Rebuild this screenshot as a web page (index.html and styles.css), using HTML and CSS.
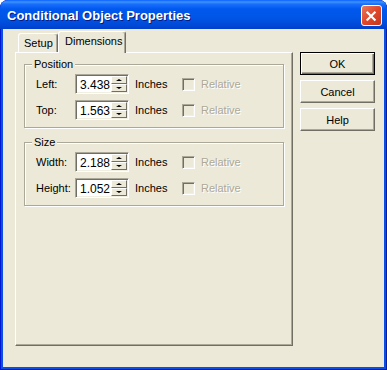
FILE: index.html
```html
<!DOCTYPE html>
<html lang="en">
<head>
    <meta charset="UTF-8">
    <meta name="viewport" content="width=device-width, initial-scale=1.0">
    <title>Conditional Object Properties</title>
    <link rel="stylesheet" href="styles.css">
</head>
<body>
    <div class="window">
        <!-- Title bar -->
        <div class="titlebar">
            <span class="title">Conditional Object Properties</span>
            <span class="close">
                <svg width="21" height="21" viewBox="0 0 21 21">
                    <path d="M6 6 L14 14 M14 6 L6 14" stroke="#fff" stroke-width="2.4" stroke-linecap="square"/>
                </svg>
            </span>
        </div>

        <div class="client">
            <!-- Property sheet -->
            <div class="sheet">
                <div class="tabs">
                    <div class="tab setup">Setup</div>
                    <div class="tab active">Dimensions</div>
                </div>
                <div class="panel">
                    <div class="group">
                        <span class="group-title">Position</span>
                        <div class="row">
                            <span class="row-label">Left:</span>
                            <div class="spin-edit"><span class="value">3.438</span><div class="spinner"><span class="spin-btn up"></span><span class="spin-btn down"></span></div></div>
                            <span class="unit">Inches</span>
                            <span class="check"></span>
                            <span class="check-label">Relative</span>
                        </div>
                        <div class="row">
                            <span class="row-label">Top:</span>
                            <div class="spin-edit"><span class="value">1.563</span><div class="spinner"><span class="spin-btn up"></span><span class="spin-btn down"></span></div></div>
                            <span class="unit">Inches</span>
                            <span class="check"></span>
                            <span class="check-label">Relative</span>
                        </div>
                    </div>
                    <div class="group">
                        <span class="group-title">Size</span>
                        <div class="row">
                            <span class="row-label">Width:</span>
                            <div class="spin-edit"><span class="value">2.188</span><div class="spinner"><span class="spin-btn up"></span><span class="spin-btn down"></span></div></div>
                            <span class="unit">Inches</span>
                            <span class="check"></span>
                            <span class="check-label">Relative</span>
                        </div>
                        <div class="row">
                            <span class="row-label">Height:</span>
                            <div class="spin-edit"><span class="value">1.052</span><div class="spinner"><span class="spin-btn up"></span><span class="spin-btn down"></span></div></div>
                            <span class="unit">Inches</span>
                            <span class="check"></span>
                            <span class="check-label">Relative</span>
                        </div>
                    </div>
                </div>
            </div>

            <!-- Dialog buttons -->
            <div class="buttons">
                <div class="btn default">OK</div>
                <div class="btn">Cancel</div>
                <div class="btn">Help</div>
            </div>
        </div>
    </div>
</body>
</html>
```

FILE: styles.css
```css
body {
    margin: 0;
    background: #fff;
    font: 11px "Liberation Sans", Arial, sans-serif;
    color: #000;
}
.window {
    width: 387px;
    height: 370px;
    box-sizing: border-box;
    padding: 0 3px 3px;
    display: flex;
    flex-direction: column;
    background: #0a4fe2;
    border-radius: 8px 8px 0 0;
    box-shadow: inset 1px 0 #0019cf, inset -1px 0 #001ea0, inset 0 -1px #001ea0;
    overflow: hidden;
}
.titlebar {
    height: 29px;
    margin: 0 -3px;
    flex-shrink: 0;
    display: flex;
    align-items: center;
    justify-content: space-between;
    padding: 0 5px 0 7px;
    background: linear-gradient(#0a5fff 0, #3d95ff 2px, #1a6ffc 4px, #0058ee 9px, #0055e5 18px, #0049d8 25px, #003fc8 29px);
    border-radius: 8px 8px 0 0;
}
.title {
    color: #fff;
    font-weight: bold;
    font-size: 13px;
    text-shadow: 1px 1px #0a1883;
    margin-top: 1px;
}
.close {
    width: 21px;
    height: 21px;
    box-sizing: border-box;
    border: 1px solid #fff;
    border-radius: 3px;
    background: linear-gradient(135deg, #e97a5e, #e0472a 50%, #c3381d);
    display: flex;
    margin-top: 2px;
}
.client {
    flex: 1;
    background: #ece9d8;
    display: flex;
    gap: 7px;
    padding: 2px 0 0 12px;
}
.sheet {
    width: 278px;
    display: flex;
    flex-direction: column;
}
.tabs {
    display: flex;
    align-items: flex-start;
    padding-left: 3px;
}
.tab {
    height: 19px;
    margin-top: 2px;
    box-sizing: border-box;
    display: flex;
    align-items: center;
    padding: 0 0 1px 5px;
    border: 1px solid #fff;
    border-right-color: #716f64;
    border-bottom: none;
    border-radius: 3px 3px 0 0;
    box-shadow: inset -1px 0 #aca899;
    background: #ece9d8;
}
.tab.setup {
    width: 40px;
}
.tab.active {
    width: 68px;
    height: 22px;
    margin-top: 0;
    margin-bottom: -1px;
    padding: 0 0 3px 6px;
    position: relative;
    z-index: 1;
}
.panel {
    height: 294px;
    box-sizing: border-box;
    border: 1px solid #fff;
    border-right-color: #716f64;
    border-bottom-color: #716f64;
    box-shadow: inset -1px -1px #aca899;
    padding: 11px 0 0 8px;
}
.group {
    position: relative;
    width: 260px;
    box-sizing: border-box;
    border: 1px solid #aca899;
    box-shadow: inset 1px 1px #fff, 1px 1px #fff;
    padding: 9px 0 7px 11px;
    display: flex;
    flex-direction: column;
    gap: 6px;
}
.group + .group {
    margin-top: 14px;
}
.group-title {
    position: absolute;
    top: -7px;
    left: 7px;
    padding: 0 2px;
    line-height: 13px;
    background: #ece9d8;
}
.row {
    height: 20px;
    display: flex;
    align-items: center;
}
.row-label {
    width: 39px;
}
.spin-edit {
    width: 54px;
    height: 20px;
    box-sizing: border-box;
    border: 1px solid;
    border-color: #aca899 #fff #fff #aca899;
    box-shadow: inset 1px 1px #716f64, inset -1px -1px #f1efe2;
    background: #fff;
    display: flex;
    padding: 1px;
}
.value {
    flex: 1;
    text-align: right;
    padding: 2px 1px 0 0;
    font-size: 12px;
}
.spinner {
    width: 16px;
    display: flex;
    flex-direction: column;
}
.spin-btn {
    flex: 1;
    position: relative;
    background: #ece9d8;
    box-sizing: border-box;
    border: 1px solid;
    border-color: #fff #716f64 #716f64 #fff;
}
.spin-btn::after {
    content: "";
    position: absolute;
    left: 4px;
    top: 2px;
    border-left: 3px solid transparent;
    border-right: 3px solid transparent;
}
.spin-btn.up::after {
    border-bottom: 2px solid #000;
}
.spin-btn.down::after {
    border-top: 2px solid #000;
}
.unit {
    width: 47px;
    margin-left: 6px;
}
.check {
    width: 13px;
    height: 13px;
    box-sizing: border-box;
    border: 1px solid;
    border-color: #aca899 #fff #fff #aca899;
    box-shadow: inset 1px 1px #716f64, inset -1px -1px #f1efe2;
    background: #ece9d8;
}
.check-label {
    margin-left: 6px;
    color: #aca899;
    text-shadow: 1px 1px #fff;
}
.buttons {
    display: flex;
    flex-direction: column;
    gap: 5px;
    padding-top: 21px;
}
.btn {
    width: 75px;
    height: 23px;
    box-sizing: border-box;
    display: flex;
    align-items: center;
    justify-content: center;
    border: 1px solid;
    border-color: #fff #716f64 #716f64 #fff;
    box-shadow: inset -1px -1px #aca899;
    background: #ece9d8;
}
.btn.default {
    border-color: #000;
    box-shadow: inset 1px 1px #fff, inset -1px -1px #716f64, inset -2px -2px #aca899;
}
```
